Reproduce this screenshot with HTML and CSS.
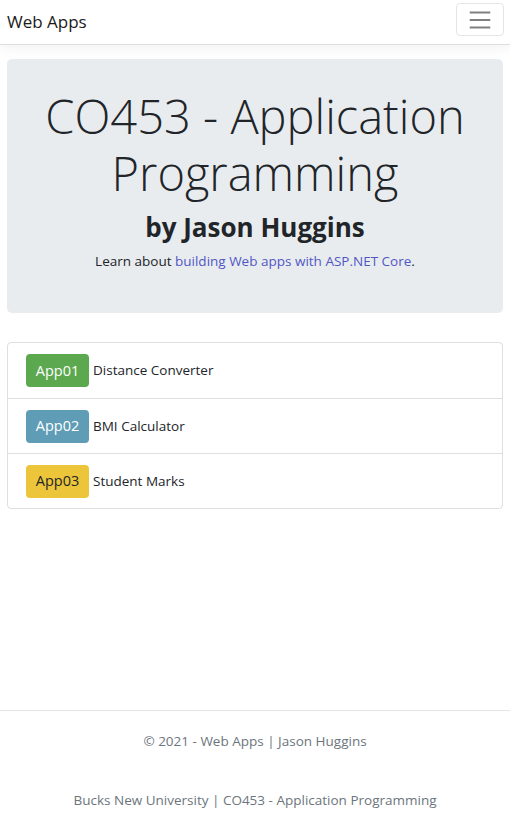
FILE: index.html
```html
<!DOCTYPE html>
<html lang="en">
<head>
<meta charset="utf-8">
<title>Web Apps</title>
<link rel="stylesheet" href="styles.css">
</head>
<body>
<header class="site-header">
  <nav class="navbar">
    <a class="brand" href="#">Web Apps</a>
    <button class="toggler" type="button" aria-label="Toggle navigation">
      <svg class="toggler-icon" viewBox="0 0 30 30" width="28" height="28">
        <path d="M4 7h22M4 15h22M4 23h22" stroke="rgba(0,0,0,0.5)" stroke-width="2" stroke-linecap="butt" fill="none"/>
      </svg>
    </button>
  </nav>
</header>

<main class="container">
  <section class="jumbotron">
    <h1 class="display">CO453 - Application Programming</h1>
    <h2 class="byline">by Jason Huggins</h2>
    <p class="lead-text">Learn about <a class="link" href="#">building Web apps with ASP.NET Core</a>.</p>
  </section>

  <ul class="list-group">
    <li class="list-item"><span class="app-badge badge-success">App01</span><span class="app-name">Distance Converter</span></li>
    <li class="list-item"><span class="app-badge badge-info">App02</span><span class="app-name">BMI Calculator</span></li>
    <li class="list-item"><span class="app-badge badge-warning">App03</span><span class="app-name">Student Marks</span></li>
  </ul>
</main>

<footer class="footer">
  <p class="footer-line">© 2021 - Web Apps | Jason Huggins</p>
  <p class="footer-line footer-second">Bucks New University | CO453 - Application Programming</p>
</footer>
</body>
</html>
```
FILE: styles.css
```css
* { box-sizing: border-box; }

html, body { height: 100%; }

body {
  margin: 0;
  font-family: "Open Sans", "Noto Sans", "DejaVu Sans", sans-serif;
  font-size: 13.5px;
  line-height: 1.5;
  color: #212529;
  background: #fff;
  display: flex;
  flex-direction: column;
  min-height: 100vh;
}

.site-header {
  border-bottom: 1px solid #dedede;
  box-shadow: 0 4px 12px rgba(0,0,0,0.05);
  margin-bottom: 14px;
}

.navbar {
  height: 44px;
  display: flex;
  align-items: center;
  justify-content: space-between;
  padding: 0 6px 0 7px;
}

.brand {
  font-size: 17px;
  color: #1a1a1a;
  text-decoration: none;
  line-height: 1;
  padding-bottom: 2px;
}

.toggler {
  width: 48px;
  height: 33px;
  margin-top: -5px;
  padding: 0;
  display: flex;
  align-items: center;
  justify-content: center;
  background: transparent;
  border: 1px solid rgba(0,0,0,0.1);
  border-radius: 4px;
}

.toggler-icon { display: block; }

.container {
  padding: 0 7px;
}

.jumbotron {
  background: #e9ecef;
  border-radius: 5px;
  padding: 29px 16px 42px;
  text-align: center;
  margin-bottom: 29px;
}

.display {
  margin: 0;
  font-size: 47px;
  font-weight: 300;
  line-height: 57px;
  color: #212529;
}

.byline {
  margin: 9px 0 0;
  font-size: 26px;
  font-weight: 700;
  line-height: 33px;
}

.lead-text {
  margin: 7px 0 0;
  font-size: 13.5px;
  line-height: 20px;
}

.link {
  color: #5057c4;
  text-decoration: none;
}

.list-group {
  list-style: none;
  margin: 0;
  padding: 0;
  border: 1px solid rgba(0,0,0,0.125);
  border-radius: 4px;
}

.list-item {
  display: flex;
  align-items: center;
  height: 55px;
  padding: 0 18px;
  border-top: 1px solid rgba(0,0,0,0.125);
}

.list-item:first-child { border-top: 0; height: 55px; }

.app-badge {
  display: inline-flex;
  align-items: center;
  justify-content: center;
  width: 63px;
  height: 33px;
  border-radius: 4px;
  font-size: 14.5px;
  color: #fff;
  margin-right: 4px;
}

.badge-success { background: #5ca84e; }
.badge-info { background: #5e9db5; }
.badge-warning { background: #ecc53a; color: #212529; }

.app-name { font-size: 13.5px; }

.footer {
  margin-top: auto;
  border-top: 1px solid #e5e5e5;
  padding: 20px 0 13px;
  text-align: center;
  color: #6c757d;
}

.footer-line {
  margin: 0;
  font-size: 13.5px;
  line-height: 21px;
}

.footer-second { margin-top: 38px; }
```
